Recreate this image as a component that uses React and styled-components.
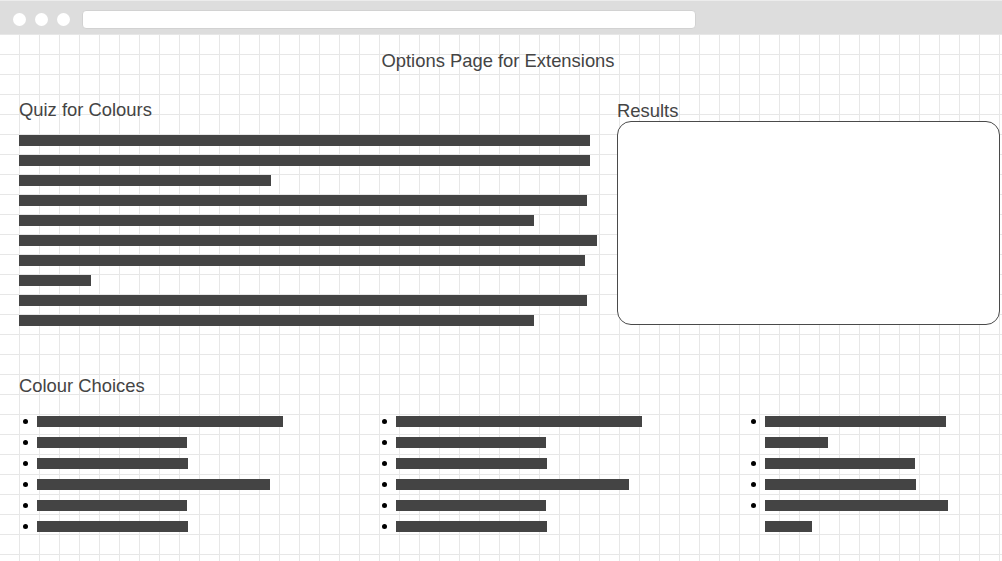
import React from "react";
import styled, { createGlobalStyle } from "styled-components";

const Global = createGlobalStyle`
  html, body { margin: 0; padding: 0; height: 100%; overflow: hidden; }
  body {
    font-family: "Liberation Sans", Arial, sans-serif;
    color: #444;
    background: #fff;
  }
  #root { height: 100%; }
`;

const Frame = styled.div`
  display: flex;
  flex-direction: column;
  height: 100%;
`;

const BrowserBar = styled.div`
  flex: 0 0 auto;
  height: 34px;
  box-sizing: border-box;
  padding: 3px 0 0 13px;
  display: flex;
  align-items: center;
  gap: 9px;
  background: #dddddd;
  border-top: 1px solid #ececec;
`;

const Dot = styled.span`
  width: 13px;
  height: 13px;
  border-radius: 50%;
  background: #fff;
`;

const UrlField = styled.div`
  margin-left: 3px;
  width: 614px;
  height: 19px;
  box-sizing: border-box;
  border-radius: 4px;
  background: #fff;
  border: 1px solid #d2d2d2;
`;

const Page = styled.main`
  flex: 1 1 auto;
  background-color: #fff;
  background-image:
    linear-gradient(to right, transparent 19px, #e7e7e7 19px, #e7e7e7 20px, transparent 20px),
    linear-gradient(to bottom, #e7e7e7 1px, transparent 1px);
  background-size: 20px 20px;
  background-position: 0 0;
`;

const Title = styled.h1`
  margin: 16px 0 0;
  padding-right: 6px;
  font-size: 18.4px;
  line-height: 21px;
  font-weight: normal;
  text-align: center;
  color: #444;
`;

const TopSection = styled.section`
  display: flex;
  gap: 18px;
  padding: 0 2px 0 19px;
`;

const QuizColumn = styled.div`
  width: 580px;
  display: flex;
  flex-direction: column;
`;

const SideColumn = styled.div`
  width: 383px;
  display: flex;
  flex-direction: column;
`;

const Heading = styled.h2`
  margin: ${(p) => p.$top || 0}px 0 0;
  font-size: 18.4px;
  line-height: ${(p) => p.$lh || 21}px;
  font-weight: normal;
  color: #444;
`;

const QuizLines = styled.div`
  margin-top: 15px;
  display: flex;
  flex-direction: column;
  gap: 9px;
`;

const Bar = styled.div`
  height: 11px;
  background: #444;
  width: ${(p) => p.$w}px;
`;

const ResultsBox = styled.div`
  height: 204px;
  box-sizing: border-box;
  border: 1px solid #4a4a4a;
  border-radius: 14px;
  background: #fff;
`;

const ChoicesSection = styled.section`
  margin-top: 49px;
  padding-left: 19px;
`;

const Columns = styled.div`
  margin-top: 15px;
  display: grid;
  grid-template-columns: 359px 369px 1fr;
`;

const List = styled.ul`
  margin: 0;
  padding: 0;
  list-style: none;
`;

const Item = styled.li`
  display: flex;
  align-items: flex-start;
  gap: 9px;
  &::before {
    content: "";
    flex: 0 0 auto;
    width: 5px;
    height: 5px;
    margin: 8px 0 0 4px;
    border-radius: 50%;
    background: #000;
  }
`;

const ItemLines = styled.div`
  display: flex;
  flex-direction: column;
`;

const ItemBar = styled(Bar)`
  margin: 5px 0;
`;

const quiz = [571, 571, 252, 568, 515, 578, 566, 72, 568, 515];

const columns = [
  [[246], [150], [151], [233], [150], [151]],
  [[246], [150], [151], [233], [150], [151]],
  [[181, 63], [150], [151], [183, 47]],
];

export default function App() {
  return (
    <>
      <Global />
      <Frame>
        <BrowserBar>
          <Dot />
          <Dot />
          <Dot />
          <UrlField />
        </BrowserBar>
        <Page>
          <Title>Options Page for Extensions</Title>
          <TopSection>
            <QuizColumn>
              <Heading $top={28}>Quiz for Colours</Heading>
              <QuizLines>
                {quiz.map((w, i) => (
                  <Bar key={i} $w={w} />
                ))}
              </QuizLines>
            </QuizColumn>
            <SideColumn>
              <Heading $top={30} $lh={20}>Results</Heading>
              <ResultsBox />
            </SideColumn>
          </TopSection>
          <ChoicesSection>
            <Heading>Colour Choices</Heading>
            <Columns>
              {columns.map((col, ci) => (
                <List key={ci}>
                  {col.map((lines, li) => (
                    <Item key={li}>
                      <ItemLines>
                        {lines.map((w, k) => (
                          <ItemBar key={k} $w={w} />
                        ))}
                      </ItemLines>
                    </Item>
                  ))}
                </List>
              ))}
            </Columns>
          </ChoicesSection>
        </Page>
      </Frame>
    </>
  );
}
